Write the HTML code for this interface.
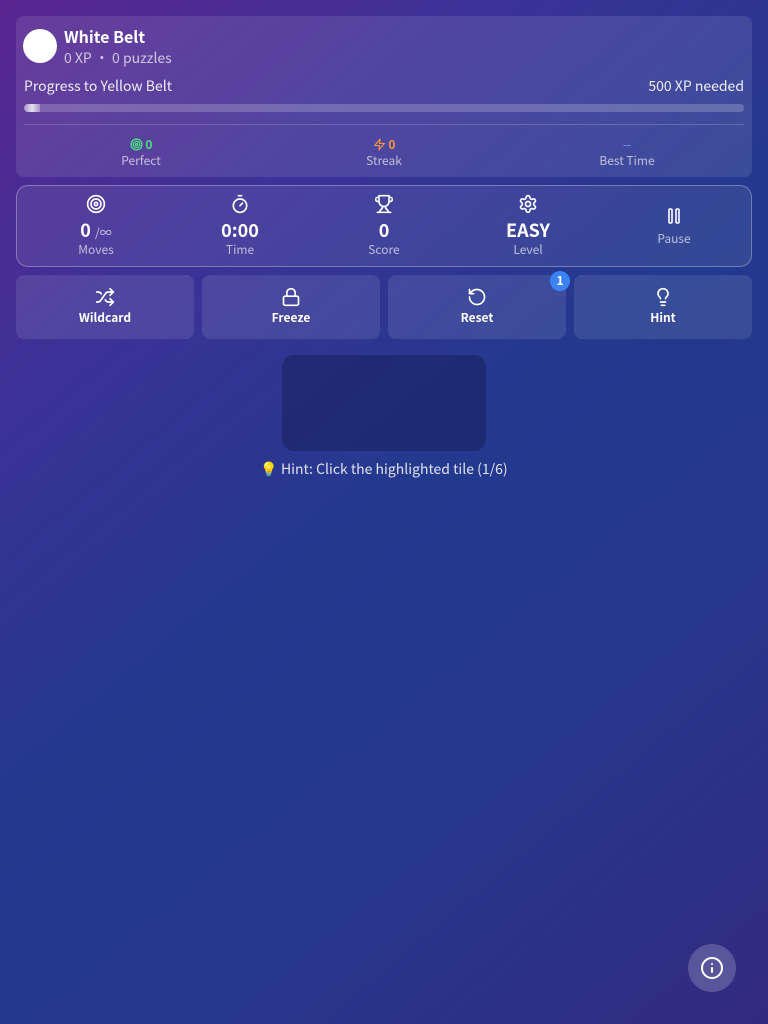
<!DOCTYPE html>
<html><head><meta charset="utf-8"><style>
*{box-sizing:border-box;margin:0;padding:0}
body{width:768px;height:1024px;overflow:hidden;font-family:"Noto Sans CJK SC","Liberation Sans",sans-serif;color:#fff;background:linear-gradient(140deg,#5a2590 0%,#3b3297 25%,#22398e 50%,#27368a 75%,#322a80 100%);position:relative}
svg{stroke-linecap:round;stroke-linejoin:round}
.card{position:absolute;left:16px;width:736px;background:rgba(255,255,255,.1);border-radius:8px}
.abs{position:absolute}
.c{text-align:center}
.lbl{font-size:12px;color:rgba(255,255,255,.65)}
.btn{position:absolute;top:275px;width:178px;height:64px;background:rgba(255,255,255,.1);border-radius:8px;text-align:center;font-size:12px;font-weight:bold}
.btn svg{display:block;margin:12px auto 0}
</style></head><body>
<div class="card" style="top:16px;height:161px">
  <div class="abs" style="left:7px;top:13px;width:34px;height:34px;border-radius:50%;background:#fff"></div>
  <div class="abs" style="left:48px;top:8px;font-size:16px;font-weight:bold;line-height:24px">White Belt</div>
  <div class="abs" style="left:48px;top:32px;font-size:14px;line-height:20px;color:rgba(255,255,255,.7)">0 XP • 0 puzzles</div>
  <div class="abs" style="left:8px;top:60px;font-size:14px;line-height:20px;color:rgba(255,255,255,.9)">Progress to Yellow Belt</div>
  <div class="abs" style="right:8px;top:60px;font-size:14px;line-height:20px;color:rgba(255,255,255,.9)">500 XP needed</div>
  <div class="abs" style="left:8px;top:88px;width:720px;height:8px;border-radius:4px;background:rgba(255,255,255,.2);overflow:hidden"><div style="width:16px;height:8px;background:linear-gradient(90deg,rgba(255,255,255,.3),rgba(255,255,255,.8),rgba(255,255,255,.3))"></div></div>
  <div class="abs" style="left:8px;top:108px;width:720px;height:1px;background:rgba(255,255,255,.2)"></div>
  <div class="abs c" style="left:65px;top:121px;width:120px">
    <div style="font-size:12px;line-height:16px;color:#4ade80;font-weight:bold"><svg width="13" height="13" viewBox="0 0 24 24" fill="none" stroke="#4ade80" stroke-width="2.5" style="vertical-align:-2px"><circle cx="12" cy="12" r="10"/><circle cx="12" cy="12" r="6"/><circle cx="12" cy="12" r="2"/></svg> 0</div>
    <div class="lbl" style="line-height:16px">Perfect</div></div>
  <div class="abs c" style="left:308px;top:121px;width:120px">
    <div style="font-size:12px;line-height:16px;color:#fb923c;font-weight:bold"><svg width="13" height="13" viewBox="0 0 24 24" fill="none" stroke="#fb923c" stroke-width="2.2" style="vertical-align:-2px"><path d="M13 2L3 14h9l-1 8 10-12h-9l1-8z"/></svg> 0</div>
    <div class="lbl" style="line-height:16px">Streak</div></div>
  <div class="abs c" style="left:551px;top:121px;width:120px">
    <div style="font-size:12px;line-height:16px;color:#7aa2f7">--</div>
    <div class="lbl" style="line-height:16px">Best Time</div></div>
</div>
<div class="abs" style="left:16px;top:185px;width:736px;height:82px;border:1px solid rgba(255,255,255,.3);border-radius:12px;background:rgba(255,255,255,.08)">
  <div class="abs c" style="left:8px;top:8px;width:142px">
    <svg width="20" height="20" viewBox="0 0 24 24" fill="none" stroke="#fff" stroke-width="2"><circle cx="12" cy="12" r="10"/><circle cx="12" cy="12" r="6"/><circle cx="12" cy="12" r="2"/></svg>
    <div style="font-size:18px;font-weight:bold;line-height:22px;height:22px">0 <span style="font-size:12px;font-weight:normal;color:rgba(255,255,255,.7)">/∞</span></div>
    <div class="lbl" style="line-height:18px">Moves</div></div>
  <div class="abs c" style="left:152px;top:8px;width:142px">
    <svg width="20" height="20" viewBox="0 0 24 24" fill="none" stroke="#fff" stroke-width="2"><line x1="10" y1="2" x2="14" y2="2"/><line x1="12" y1="14" x2="15" y2="11"/><circle cx="12" cy="14" r="8"/></svg>
    <div style="font-size:18px;font-weight:bold;line-height:22px">0:00</div>
    <div class="lbl" style="line-height:18px">Time</div></div>
  <div class="abs c" style="left:296px;top:8px;width:142px">
    <svg width="20" height="20" viewBox="0 0 24 24" fill="none" stroke="#fff" stroke-width="2"><path d="M6 9H4.5a2.5 2.5 0 0 1 0-5H6M18 9h1.5a2.5 2.5 0 0 0 0-5H18M4 22h16M10 14.7V17c0 .6-.5 1-1 1.2C7.9 18.8 7 20.2 7 22M14 14.7V17c0 .6.5 1 1 1.2 1.1.5 2 2 2 3.8M18 2H6v7a6 6 0 0 0 12 0V2z"/></svg>
    <div style="font-size:18px;font-weight:bold;line-height:22px">0</div>
    <div class="lbl" style="line-height:18px">Score</div></div>
  <div class="abs c" style="left:440px;top:8px;width:142px">
    <svg width="20" height="20" viewBox="0 0 24 24" fill="none" stroke="#fff" stroke-width="2"><path d="M12.2 2h-.4a2 2 0 0 0-2 2v.2a2 2 0 0 1-1 1.7l-.4.3a2 2 0 0 1-2 0l-.2-.1a2 2 0 0 0-2.7.7l-.2.4a2 2 0 0 0 .7 2.7l.2.1a2 2 0 0 1 1 1.7v.5a2 2 0 0 1-1 1.7l-.2.1a2 2 0 0 0-.7 2.7l.2.4a2 2 0 0 0 2.7.7l.2-.1a2 2 0 0 1 2 0l.4.3a2 2 0 0 1 1 1.7v.2a2 2 0 0 0 2 2h.4a2 2 0 0 0 2-2v-.2a2 2 0 0 1 1-1.7l.4-.3a2 2 0 0 1 2 0l.2.1a2 2 0 0 0 2.7-.7l.2-.4a2 2 0 0 0-.7-2.7l-.2-.1a2 2 0 0 1-1-1.7v-.5a2 2 0 0 1 1-1.7l.2-.1a2 2 0 0 0 .7-2.7l-.2-.4a2 2 0 0 0-2.7-.7l-.2.1a2 2 0 0 1-2 0l-.4-.3a2 2 0 0 1-1-1.7V4a2 2 0 0 0-2-2z"/><circle cx="12" cy="12" r="3"/></svg>
    <div style="font-size:18px;font-weight:bold;line-height:22px">EASY</div>
    <div class="lbl" style="line-height:18px">Level</div></div>
  <div class="abs c" style="left:586px;top:20px;width:142px">
    <svg width="16" height="18" viewBox="0 0 16 18" fill="none" stroke="#fff" stroke-width="1.6"><rect x="3" y="2" width="3" height="14" rx="1"/><rect x="10" y="2" width="3" height="14" rx="1"/></svg>
    <div class="lbl" style="line-height:18px;font-size:12px">Pause</div></div>
</div>
<div class="btn" style="left:16px"><svg width="20" height="20" viewBox="0 0 24 24" fill="none" stroke="#fff" stroke-width="2"><path d="M2 18h1.4c1.3 0 2.5-.6 3.300-1.7l6.1-8.6c.7-1.1 2-1.7 3.3-1.7H22"/><path d="m18 2 4 4-4 4"/><path d="M2 6h1.9c1.5 0 2.9.9 3.6 2.2"/><path d="M22 18h-5.9c-1.3 0-2.6-.7-3.3-1.8l-.5-.8"/><path d="m18 14 4 4-4 4"/></svg><div style="margin-top:2px">Wildcard</div></div>
<div class="btn" style="left:202px"><svg width="20" height="20" viewBox="0 0 24 24" fill="none" stroke="#fff" stroke-width="2"><rect x="3" y="11" width="18" height="11" rx="2"/><path d="M7 11V7a5 5 0 0 1 10 0v4"/></svg><div style="margin-top:2px">Freeze</div></div>
<div class="btn" style="left:388px"><svg width="20" height="20" viewBox="0 0 24 24" fill="none" stroke="#fff" stroke-width="2"><path d="M3 12a9 9 0 1 0 9-9 9.75 9.75 0 0 0-6.74 2.74L3 8"/><path d="M3 3v5h5"/></svg><div style="margin-top:2px">Reset</div></div>
<div class="abs c" style="left:550px;top:271px;width:20px;height:20px;border-radius:50%;background:#3b82f6;font-size:12px;font-weight:bold;line-height:20px">1</div>
<div class="btn" style="left:574px"><svg width="20" height="20" viewBox="0 0 24 24" fill="none" stroke="#fff" stroke-width="2"><path d="M15 14c.2-1 .7-1.7 1.5-2.5 1-.9 1.5-2.2 1.5-3.5A6 6 0 0 0 6 8c0 1 .2 2.2 1.5 3.5.7.7 1.3 1.5 1.5 2.5"/><path d="M9 18h6M10 22h4"/></svg><div style="margin-top:2px">Hint</div></div>
<div class="abs" style="left:282px;top:355px;width:204px;height:96px;border-radius:12px;background:rgba(25,35,95,.6)"></div>
<div class="abs c" style="left:0;top:458px;width:768px;font-size:14px;line-height:22px;color:rgba(255,255,255,.85)"><span style="color:#facc15">💡</span> Hint: Click the highlighted tile (1/6)</div>
<div class="abs" style="left:688px;top:944px;width:48px;height:48px;border-radius:50%;background:rgba(255,255,255,.2)"><svg style="position:absolute;left:12px;top:12px" width="24" height="24" viewBox="0 0 24 24" fill="none" stroke="#fff" stroke-width="2"><circle cx="12" cy="12" r="10"/><path d="M12 16v-4"/><path d="M12 8h.01"/></svg></div>
</body></html>
